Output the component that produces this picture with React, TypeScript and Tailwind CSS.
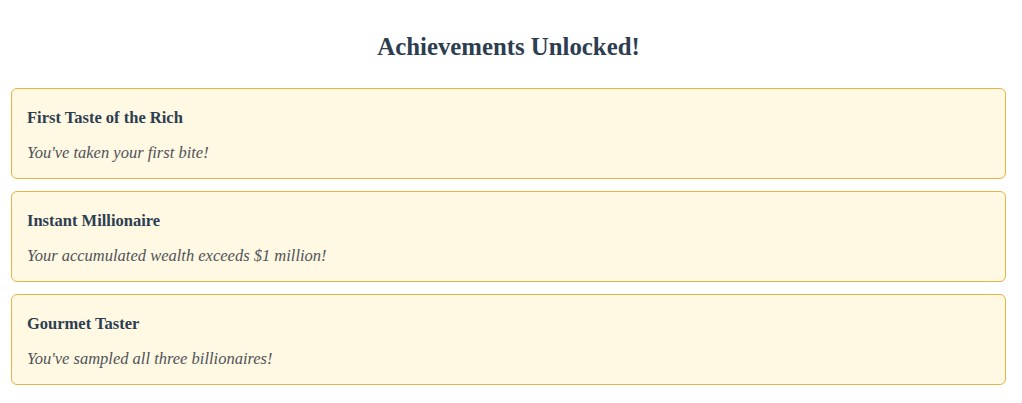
const achievements = [
  { title: "First Taste of the Rich", desc: "You've taken your first bite!" },
  { title: "Instant Millionaire", desc: "Your accumulated wealth exceeds $1 million!" },
  { title: "Gourmet Taster", desc: "You've sampled all three billionaires!" },
];

const App = () => {
  return (
    <div
      className="min-h-[403px] bg-white pl-[11px] pr-[16px] pt-[33px]"
      style={{ fontFamily: '"Liberation Serif", "Times New Roman", serif' }}
    >
      <h2 className="text-center text-[24.8px] leading-[28px] font-bold text-[#2c3e50] mb-[27px]">
        Achievements Unlocked!
      </h2>
      <div className="flex flex-col gap-[12px]">
        {achievements.map((a) => (
          <div
            key={a.title}
            className="rounded-[6px] border border-[#e5b444] bg-[#fff8e3] px-[15px] pt-[20px] pb-[16px]"
          >
            <h3 className="text-[16.5px] leading-[18px] font-bold text-[#2c3e50] mb-[17px]">{a.title}</h3>
            <p className="text-[16.5px] leading-[18px] italic text-[#4f5359]">{a.desc}</p>
          </div>
        ))}
      </div>
    </div>
  );
};

export default App;
